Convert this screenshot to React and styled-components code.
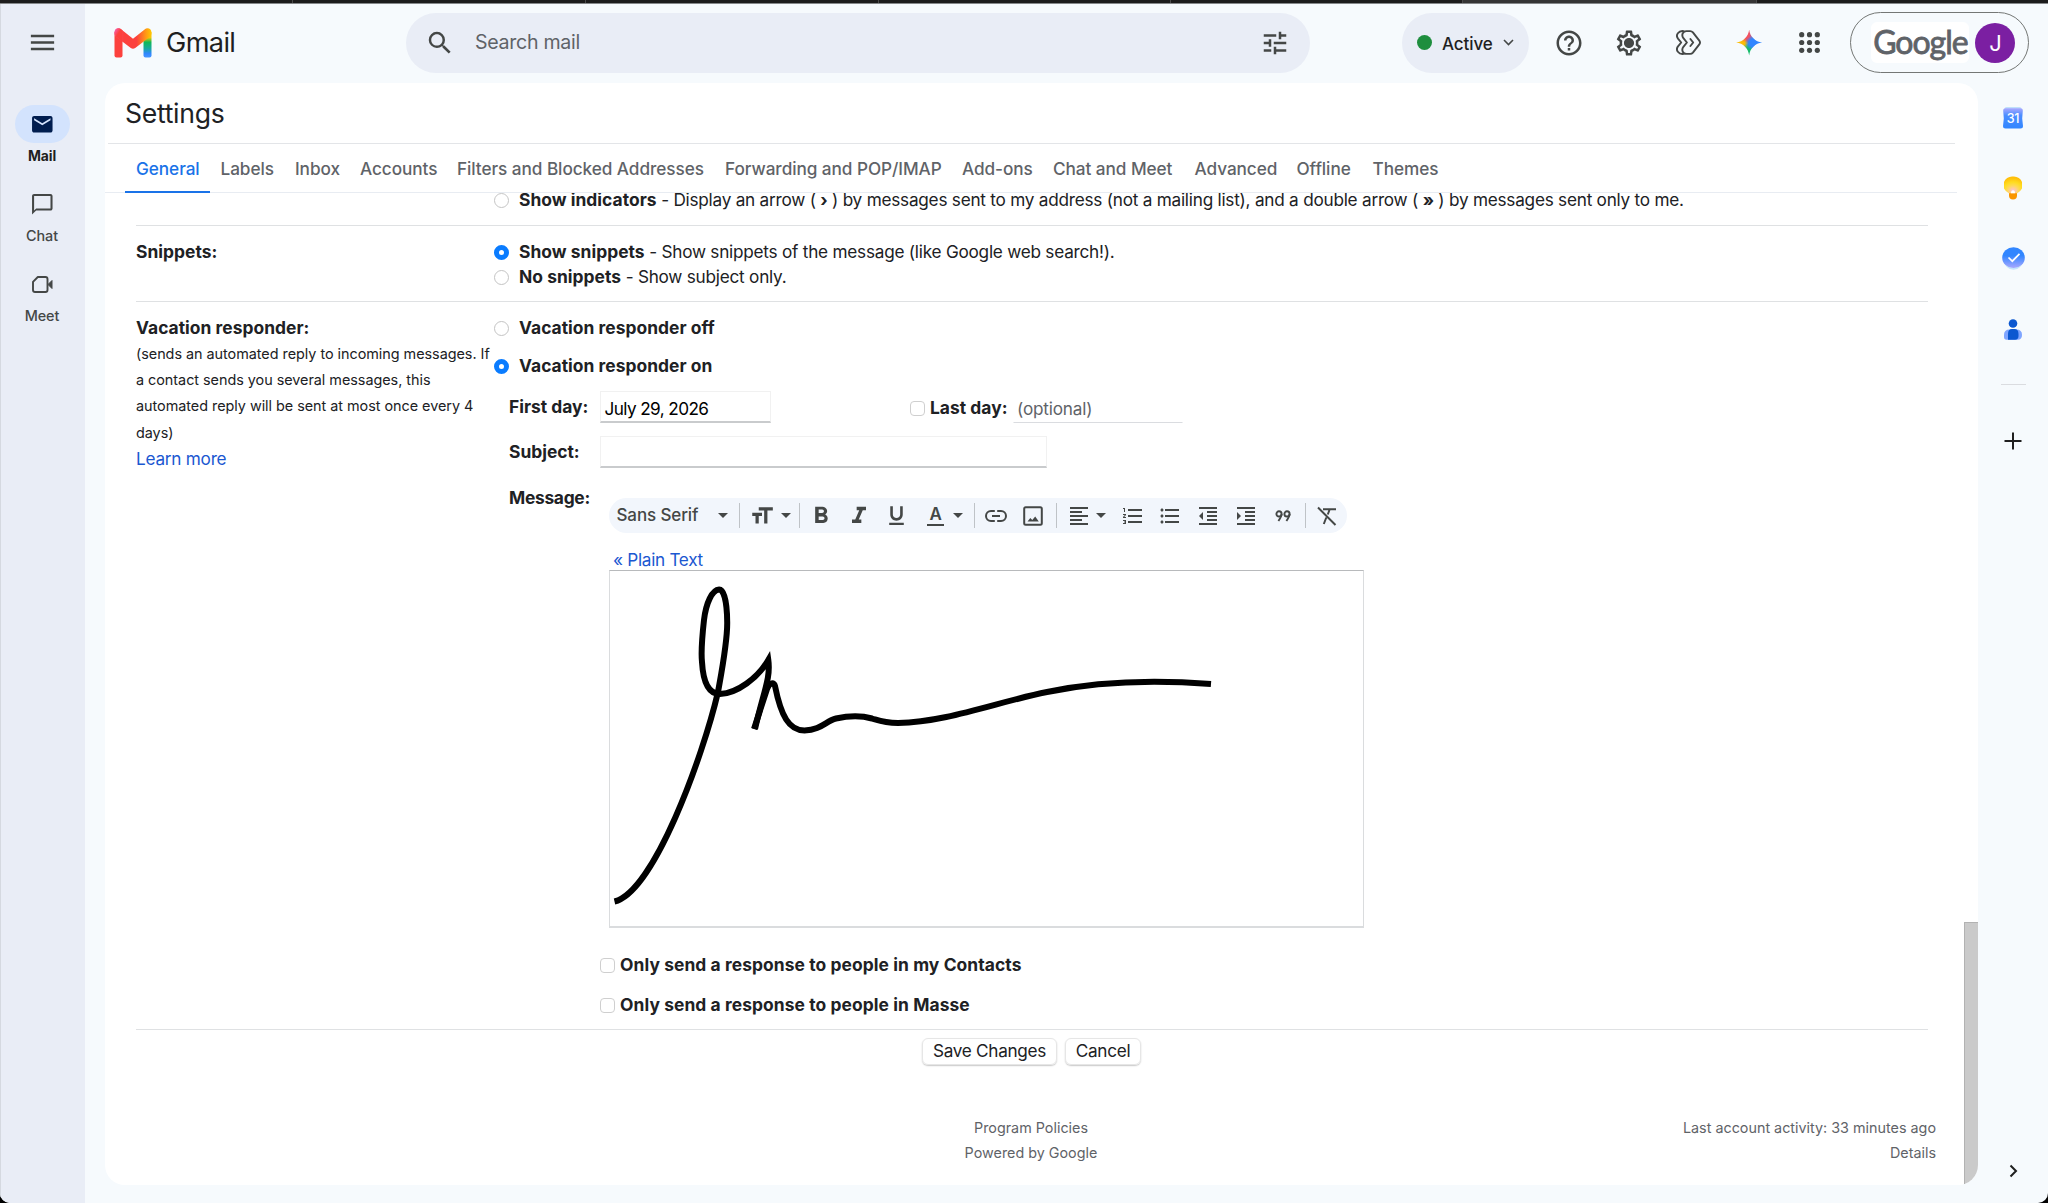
import React, { useState } from "react";
import styled, { createGlobalStyle } from "styled-components";
import {
    MdMenu,
    MdMail,
    MdChatBubbleOutline,
    MdSearch,
    MdTune,
    MdHelpOutline,
    MdOutlineSettings,
    MdFormatSize,
    MdFormatBold,
    MdFormatItalic,
    MdFormatUnderlined,
    MdFormatAlignLeft,
    MdFormatListNumbered,
    MdFormatListBulleted,
    MdFormatIndentDecrease,
    MdFormatIndentIncrease,
} from "react-icons/md";

const GlobalStyle = createGlobalStyle`
    * {
        box-sizing: border-box;
    }
    body {
        margin: 0;
        background: #000;
        color: #202124;
        font-family: Inter, "Liberation Sans", sans-serif;
        font-size: 17.2px;
        letter-spacing: -0.24px;
        overflow: hidden;
    }
    svg {
        display: block;
        flex: none;
    }
`;

const Window = styled.div`
    width: 2048px;
    height: 1203px;
    display: flex;
    flex-direction: column;
    background: #f6fafd;
    border-radius: 0 0 10px 10px;
    overflow: hidden;
`;

const TabStrip = styled.div`
    height: 4px;
    flex: none;
    display: flex;
    background: #1c1c1c;
    border-bottom: 1px solid #85888a;
`;

const BrowserTab = styled.div`
    width: ${p => p.$w || 293}px;
    border-right: 1px solid #4a4a4a;
    background: ${p => (p.$active ? "#353535" : "transparent")};
`;

const Body = styled.div`
    flex: 1;
    display: flex;
    min-height: 0;
`;

/* left rail */
const Rail = styled.nav`
    width: 85px;
    padding-right: 2px;
    background: #e9edf6;
    border-left: 1px solid #d5d9e0;
    display: flex;
    flex-direction: column;
    align-items: center;
    color: #444746;
`;

const MenuButton = styled.div`
    height: 77px;
    margin-bottom: 24px;
    display: flex;
    align-items: center;
`;

const RailItem = styled.div`
    height: 80.3px;
    display: flex;
    flex-direction: column;
    align-items: center;
    font-size: ${p => (p.$active ? 13.9 : 14.4)}px;
    font-weight: ${p => (p.$active ? 700 : 500)};
    letter-spacing: -0.1px;
    line-height: 18px;
    color: ${p => (p.$active ? "#1f1f1f" : "#444746")};
`;

const RailIcon = styled.div`
    width: 55px;
    height: 38px;
    margin-bottom: 3.5px;
    border-radius: 19px;
    display: flex;
    align-items: center;
    justify-content: center;
    background: ${p => (p.$active ? "#d3e3fd" : "transparent")};
    color: ${p => (p.$active ? "#001d4f" : "#444746")};
`;

const Main = styled.div`
    flex: 1;
    display: flex;
    flex-direction: column;
`;

/* header */
const Header = styled.header`
    height: 79px;
    flex: none;
    display: flex;
    align-items: center;
    padding-bottom: 2px;
    color: #444746;
`;

const Brand = styled.div`
    width: 321px;
    padding-left: 29px;
    display: flex;
    align-items: center;
    gap: 14px;
    font-size: 27.2px;
    letter-spacing: -0.65px;
    color: #1f1f1f;
`;

const SearchBar = styled.div`
    width: 904px;
    height: 60px;
    padding: 0 20px 0 19px;
    border-radius: 30px;
    background: #e9edf6;
    display: flex;
    align-items: center;
    justify-content: space-between;
`;

const SearchField = styled.div`
    display: flex;
    align-items: center;
    gap: 20px;
    font-size: 19.6px;
    letter-spacing: -0.3px;
    color: #5f6368;
    svg {
        color: #444746;
    }
`;

const SearchText = styled.span`
    padding-bottom: 2px;
`;

const StatusPill = styled.div`
    width: 127px;
    height: 60px;
    margin-left: 92px;
    padding-left: 15px;
    border-radius: 30px;
    background: #e9edf6;
    display: flex;
    align-items: center;
    font-size: 17px;
    font-weight: 500;
    letter-spacing: -0.1px;
    color: #1f1f1f;
`;

const StatusDot = styled.span`
    width: 15px;
    height: 15px;
    margin-right: 10px;
    border-radius: 50%;
    background: #1e8e3e;
`;

const StatusText = styled.span`
    margin-right: 10px;
    padding-top: 3px;
`;

const HeaderIcons = styled.div`
    display: grid;
    grid-template-columns: repeat(5, 60.2px);
    place-items: center;
    margin-left: 9.5px;
    margin-right: 11px;
`;

const Spark = styled.span`
    width: 26px;
    height: 26px;
    background: radial-gradient(circle at 60% 50%, #3186ff 0 14%, transparent 34%),
        conic-gradient(from 0deg, #f5515f 0deg, #3186ff 45deg 130deg, #14bb69 165deg 195deg, #7cc04b 225deg, #fbbc04 255deg 280deg, #f5515f 325deg 360deg);
    clip-path: path("M13 0C13.7 7 19 12.3 26 13C19 13.7 13.7 19 13 26C12.3 19 7 13.7 0 13C7 12.3 12.3 7 13 0Z");
`;

const Account = styled.div`
    width: 178.5px;
    height: 60.5px;
    border: 1.5px solid #747775;
    border-radius: 31px;
    padding-left: 20px;
    display: flex;
    align-items: center;
    gap: 6px;
`;

const Wordmark = styled.div`
    width: 98px;
    height: 41px;
    border-radius: 6px;
    background: #fff;
    display: flex;
    justify-content: center;
    font-family: Lato, sans-serif;
    font-size: 32px;
    letter-spacing: -1px;
    line-height: 39px;
    color: #5f6368;
    -webkit-text-stroke: 0.8px #5f6368;
`;

const Avatar = styled.div`
    width: 40px;
    height: 40px;
    border-radius: 50%;
    background: #7b1fa2;
    color: #fff;
    font-size: 22px;
    display: flex;
    align-items: center;
    justify-content: center;
`;

/* settings panel */
const Content = styled.div`
    flex: 1;
    display: flex;
    padding: 0 0 18px 20px;
    min-height: 0;
`;

const Panel = styled.main`
    width: 1873px;
    background: #fff;
    border-radius: 20px;
    overflow: hidden;
    display: flex;
    flex-direction: column;
`;

const Title = styled.h1`
    height: 61px;
    flex: none;
    margin: 0 23px 0 3px;
    padding-left: 17px;
    border-bottom: 1px solid #e3e5e8;
    font-size: 26.6px;
    font-weight: 400;
    letter-spacing: -0.3px;
    line-height: 60px;
`;

const Tabs = styled.div`
    height: 49px;
    flex: none;
    margin-right: 21px;
    padding-left: 20px;
    display: flex;
    box-shadow: inset 0 -1px #e8ecf2;
`;

const Tab = styled.div`
    width: ${p => p.$w}px;
    padding-left: 11px;
    line-height: 50px;
    height: 49px;
    font-weight: 500;
    letter-spacing: -0.06px;
    white-space: nowrap;
    color: ${p => (p.$active ? "#1a73e8" : "#5f6368")};
    border-bottom: 2px solid ${p => (p.$active ? "#1a73e8" : "transparent")};
`;

const Scroller = styled.div`
    flex: 1;
    min-height: 0;
    display: flex;
    overflow: hidden;
`;

const ScrollContent = styled.div`
    flex: 1;
    margin-top: -7px;
    padding: 0 36px 0 31px;
`;

const ScrollTrack = styled.div`
    width: 14px;
    padding-top: 729px;
    display: flex;
`;

const ScrollThumb = styled.div`
    flex: 1;
    background: #cacaca;
    border-top: 1px solid #b2b2b2;
    border-left: 1px solid #b2b2b2;
`;

const Section = styled.section`
    height: ${p => p.$h}px;
    padding-top: ${p => p.$pt || 0}px;
    display: grid;
    grid-template-columns: 358px 1fr;
    align-items: start;
    border-bottom: 1px solid #dfe1e3;
    line-height: 27px;
`;

const Strong = styled.b`
    font-size: 17.4px;
    font-weight: 700;
    letter-spacing: 0.04px;
`;

const SectionTitle = styled(Strong)`
    display: block;
    height: 25px;
`;

const Hint = styled.p`
    margin: 2px 0 0;
    width: 360px;
    font-size: 14.4px;
    letter-spacing: -0.03px;
    line-height: 26.2px;
    white-space: pre-line;
`;

const LinkText = styled.a`
    display: block;
    letter-spacing: -0.25px;
    line-height: 25px;
    color: #1b58d1;
`;

const Option = styled.label`
    display: flex;
    height: 25px;
    margin-bottom: ${p => p.$mb || 0}px;
    white-space: pre;
`;

const RadioMark = styled.span`
    width: 15px;
    height: 15px;
    margin: 7px 10px 0 0;
    border-radius: 50%;
    border: ${p => (p.$on ? "5px solid #0a7cff" : "1px solid #c4c4c4")};
    background: #fff;
`;

const CheckMark = styled.span`
    width: 15px;
    height: 15px;
    margin: 6px 5px 0 0;
    border-radius: 4px;
    border: 1px solid #cfcfcf;
    background: #fff;
`;

const CheckText = styled(Strong)`
    letter-spacing: 0.09px;
    line-height: 25px;
`;

const Form = styled.div`
    padding: 3px 0 0 15px;
    line-height: 25px;
`;

const FormRow = styled.div`
    display: flex;
    margin-bottom: ${p => p.$mb || 0}px;
`;

const FieldLabel = styled(Strong)`
    width: 91px;
    padding-top: ${p => p.$pt || 0}px;
    letter-spacing: ${p => p.$ls || 0}px;
`;

const Input = styled.div`
    width: ${p => p.$w}px;
    height: 32px;
    padding: 4px 0 0 ${p => (p.$plain ? 3 : 3.5)}px;
    border: 1px solid ${p => (p.$plain ? "transparent" : "#f1f1f1")};
    border-bottom: ${p => (p.$plain ? "1px solid #dadce0" : "2px solid #c9cbcd")};
    line-height: 25px;
    letter-spacing: ${p => p.$ls || -0.2}px;
    color: ${p => (p.$plain ? "#5f6368" : "#000")};
`;

const LastDay = styled.div`
    margin-left: 139px;
    padding-top: 4px;
    width: 103px;
    display: flex;
`;

/* rich text editor */
const Editor = styled.div`
    padding: 12.5px 0 0 9px;
`;

const Toolbar = styled.div`
    width: 738px;
    height: 35px;
    padding-top: 1px;
    border-radius: 18px;
    background: #f2f6fc;
    display: flex;
    align-items: center;
    color: #444746;
`;

const FontPicker = styled.div`
    width: 129.5px;
    padding: 0 11px 0 7.5px;
    display: flex;
    justify-content: space-between;
    align-items: center;
    font-weight: 500;
    font-size: 17px;
    letter-spacing: -0.12px;
`;

const Caret = styled.span`
    border: 5px solid transparent;
    border-top-color: #444746;
    border-bottom: 0;
    margin: 0 ${p => p.$m || 0}px;
`;

const Divider = styled.span`
    width: 1px;
    height: 25px;
    margin-left: ${p => p.$ml || 0}px;
    background: #bfc3c7;
`;

const Tool = styled.span`
    width: 28px;
    height: 28px;
    margin-left: ${p => p.$ml}px;
    display: flex;
    align-items: center;
    justify-content: center;
`;

const ColorLetter = styled.span`
    width: 17px;
    height: 20px;
    border-bottom: 2px solid #444746;
    text-align: center;
    font-size: 17px;
    font-weight: 600;
    line-height: 16px;
`;

const PlainText = styled(LinkText)`
    height: 22.5px;
    margin: 14.5px 0 0 4px;
    letter-spacing: -0.3px;
`;

const MessageBox = styled.div`
    width: 755px;
    height: 358.5px;
    border: 1px solid #dadcde;
    border-top-color: #b8babc;
    border-bottom-width: 2px;
    margin-bottom: 23.5px;
`;

const Actions = styled.div`
    display: flex;
    justify-content: center;
    gap: 8px;
    padding: 7.5px 1px 0 0;
    height: 84.5px;
`;

const ActionButton = styled.div`
    width: ${p => p.$w}px;
    height: 27px;
    border: 1px solid #e6e6e6;
    border-radius: 6px;
    box-shadow: 0 1px 1.5px rgba(0, 0, 0, 0.22);
    text-align: center;
    line-height: 24px;
    letter-spacing: -0.3px;
`;

const Footer = styled.footer`
    margin: 0 -8px 0 -10px;
    display: grid;
    grid-template-columns: 1fr 1fr 1fr;
    text-align: center;
    font-size: 14.35px;
    letter-spacing: 0;
    line-height: 25.4px;
    color: #5f6368;
`;

const FooterRight = styled.div`
    text-align: right;
`;

/* add-on bar on the right */
const AddOns = styled.aside`
    width: 70px;
    display: flex;
    flex-direction: column;
    align-items: center;
`;

const AddOn = styled.div`
    height: 70.3px;
    display: flex;
    align-items: center;
`;

const AddOnLine = styled.div`
    width: 25px;
    height: 1px;
    margin: 20px 0 47px;
    background: #dadce0;
`;

const AddOnToggle = styled.div`
    margin-top: auto;
    margin-bottom: 7px;
`;

const CalendarText = styled.text`
    font-size: 12.5px;
    font-weight: 500;
    letter-spacing: -0.3px;
`;

const GmailLogo = () => (
    <svg width="38" height="30" viewBox="0 0 38 30">
        <defs>
            <linearGradient id="gl" x1="0" y1="0" x2="0.9" y2="1">
                <stop offset="0" stopColor="#f966c3" />
                <stop offset="0.45" stopColor="#fc413d" />
                <stop offset="1" stopColor="#fc413d" />
            </linearGradient>
            <linearGradient id="gr" x1="0" y1="0" x2="0" y2="1">
                <stop offset="0" stopColor="#ffc800" />
                <stop offset="0.22" stopColor="#f2c60c" />
                <stop offset="0.4" stopColor="#10b956" />
                <stop offset="0.65" stopColor="#18a9a0" />
                <stop offset="0.85" stopColor="#3186ff" />
                <stop offset="1" stopColor="#4796ff" />
            </linearGradient>
            <linearGradient id="gm" x1="0" y1="0" x2="1" y2="0">
                <stop offset="0" stopColor="#f966a8" />
                <stop offset="0.25" stopColor="#fc413d" />
                <stop offset="0.6" stopColor="#fc413d" />
                <stop offset="0.85" stopColor="#ff9a14" />
                <stop offset="1" stopColor="#ffc800" />
            </linearGradient>
        </defs>
        <path d="M0.5 4V27.5Q0.5 29.5 2.5 29.5H6.5Q8.5 29.5 8.5 27.5V8Z" fill="#fc413d" />
        <path d="M29.5 8V27.5Q29.5 29.5 31.5 29.5H35.5Q37.5 29.5 37.5 27.5V4Z" fill="url(#gr)" />
        <path d="M0.5 4.5C0.5 0.4 4.8-0.8 7.4 1.4L19 10.8L30.6 1.4C33.2-0.8 37.5 0.4 37.5 4.5C37.5 6.8 36.8 8 35.3 9.2L21.2 20.1Q19 21.6 16.8 20.1L2.7 9.2C1.2 8 0.5 6.8 0.5 4.5Z" fill="url(#gm)" />
        <path d="M0.5 4.5C0.5 0.4 4.8-0.8 7.4 1.4L8.5 2.3V13.7L2.7 9.2C1.2 8 0.5 6.8 0.5 4.5Z" fill="url(#gl)" />
    </svg>
);

const MeetIcon = () => (
    <svg width="21" height="17" viewBox="0 0 21 17" fill="none" stroke="#444746" strokeWidth="1.9">
        <path d="M5.8 1H13.5Q15.5 1 15.5 3V14Q15.5 16 13.5 16H3Q1 16 1 14V5.8Z" strokeLinejoin="round" />
        <path d="M16 8.5L20 4.5V12.5Z" fill="#444746" strokeWidth="1" />
    </svg>
);

const GearIcon = () => (
    <svg width="30" height="30" viewBox="0 0 30 30">
        <MdOutlineSettings size={30} />
        <circle cx="15" cy="15" r="4.6" fill="#444746" />
    </svg>
);

const LabsIcon = () => (
    <svg width="25" height="25" viewBox="0 0 25 25" fill="none" stroke="#444746" strokeWidth="1.9" strokeLinejoin="round" strokeLinecap="round">
        <path d="M7.6 1.1C2.6 0.4-0.8 5 2 8.6L5.2 12.5L2 16.4C-0.8 20 2.6 24.6 7.6 23.9" />
        <path d="M7.4 8.2C5 5 7 1.1 10.4 1.1H14.2C15.3 1.1 16.2 1.6 16.9 2.4L23.3 10.6C24.2 11.8 24.2 13.2 23.3 14.4L16.9 22.6C16.2 23.4 15.3 23.9 14.2 23.9H10.4C7 23.9 5 20 7.4 16.8L10.9 12.5Z" />
        <path d="M14.4 9L17.2 12.5L14.4 16" />
    </svg>
);

const AppsIcon = () => (
    <svg width="21" height="21" viewBox="0 0 21 21" fill="#444746">
        {[2.7, 10.5, 18.3].map(y => [2.7, 10.5, 18.3].map(x => <circle key={`${x}-${y}`} cx={x} cy={y} r="2.6" />))}
    </svg>
);

const LinkIcon = () => (
    <svg width="22" height="12" viewBox="0 0 22 12" fill="none" stroke="#444746" strokeWidth="2">
        <path d="M9.8 1H6a5 5 0 0 0 0 10H9.8M12.2 1H16a5 5 0 0 1 0 10H12.2M7 6H15" />
    </svg>
);

const ImageIcon = () => (
    <svg width="20" height="20" viewBox="0 0 20 20">
        <rect x="1.2" y="1.2" width="17.6" height="17.6" rx="1.5" fill="none" stroke="#444746" strokeWidth="2" />
        <path d="M4.500 15.500L7.300 12L9.300 14L12.200 10.500L15.800 15.500Z" fill="#444746" />
    </svg>
);

const QuoteIcon = () => (
    <svg width="16" height="12" viewBox="0 0 16 12" fill="none" stroke="#444746" strokeWidth="1.9">
        <circle cx="4" cy="3.9" r="2.6" />
        <circle cx="12" cy="3.9" r="2.6" />
        <path d="M6.6 4Q6.5 6.5 3.4 11M14.6 4Q14.5 6.5 11.4 11" />
    </svg>
);

const ClearIcon = () => (
    <svg width="20" height="20" viewBox="0 0 20 20" fill="none" stroke="#444746" strokeWidth="2">
        <path d="M1 1.5L18.5 19M6 3.2H19M12.6 3.5L10.8 8.5M9.3 11.5L6.8 18" />
    </svg>
);

const CalendarIcon = () => (
    <svg width="20" height="22" viewBox="0 0 20 22">
        <defs>
            <linearGradient id="cal" x1="0" y1="0" x2="0" y2="1">
                <stop offset="0" stopColor="#a9a8ff" />
                <stop offset="0.35" stopColor="#4b8dff" />
                <stop offset="1" stopColor="#3186ff" />
            </linearGradient>
        </defs>
        <rect x="1.5" y="0" width="17" height="6" rx="2" fill="#bfe0fb" />
        <path d="M2.5 1.3H17.5Q20 1.3 19.8 4L19.2 11.5L20 19Q20 21.5 17.5 21.5H2.5Q0 21.5 0 19L0.8 11.5L0.2 4Q0 1.3 2.5 1.3Z" fill="url(#cal)" />
        <CalendarText x="10" y="16" fill="#fff" textAnchor="middle">31</CalendarText>
    </svg>
);

const KeepIcon = () => (
    <svg width="18" height="24" viewBox="0 0 18 24">
        <defs>
            <radialGradient id="keep" cx="0.5" cy="0.85" r="0.85">
                <stop offset="0" stopColor="#ffc0dc" />
                <stop offset="0.35" stopColor="#ffd95a" />
                <stop offset="0.6" stopColor="#ffdc1f" />
                <stop offset="0.9" stopColor="#ffbf0a" />
            </radialGradient>
        </defs>
        <path d="M5 15H13V19.5A4 4 0 0 1 5 19.5Z" fill="#fa9600" />
        <path d="M9 0.5A8.7 8.7 0 0 0 4.8 17.2H13.2A8.7 8.7 0 0 0 9 0.5Z" fill="url(#keep)" />
        <path d="M7 17.2Q7 14.2 9 14.2T11 17.2Z" fill="#fff" />
    </svg>
);

const TasksIcon = () => (
    <svg width="23" height="23" viewBox="0 0 23 23">
        <defs>
            <linearGradient id="task" x1="0" y1="0" x2="0" y2="1">
                <stop offset="0.4" stopColor="#3186ff" />
                <stop offset="1" stopColor="#a9a8ff" />
            </linearGradient>
        </defs>
        <ellipse cx="11.5" cy="13.5" rx="9.5" ry="9.2" fill="#c4e4fb" />
        <ellipse cx="11.5" cy="10.7" rx="11.3" ry="10.4" fill="url(#task)" />
        <path d="M6.5 10.5L10.3 14.2L17.5 6.8" fill="none" stroke="#fff" strokeWidth="1.7" />
    </svg>
);

const ContactsIcon = () => (
    <svg width="18" height="21" viewBox="0 0 18 21">
        <circle cx="9" cy="4.5" r="4.3" fill="#0b57d0" />
        <path d="M0 16Q0 10.5 5.5 10.5H12.5Q18 10.5 18 16Q18 20.7 13.5 20.7H2.5Q0 20.7 0 18Z" fill="#7fa5ff" />
        <path d="M4 15Q4 10 8 10H10.5Q14.5 10 14.5 15V17Q14.5 20.7 11 20.7H4Z" fill="#0b57d0" />
    </svg>
);

const Signature = () => (
    <svg width="620" height="345" viewBox="1 1 620 345" fill="none" stroke="#000" strokeWidth="6">
        <path
            strokeMiterlimit="8"
            d="M5.5 331.5C45 322 94 186 109 122C114 94 118.500 71 118.200 52C118 30 114.500 19.500 110.200 19.500C103 20 97 33 95 50C93 68 92 83 93 92C94 110 99 124 111 124C128 123.500 149 108 159.300 90C161.800 108 155 120 146 159"
        />
        <path
            strokeLinejoin="round"
            d="M145 159L158 119C161 112 165 112 166 116C172 146 180 160.500 195.500 160.500C212 160 217 151 227 148.500C241 145.500 254 146 263 148.500C271 151 275 153 289 153C338 152 388 132 438 122C488 111.500 543 109.500 602 114"
        />
    </svg>
);

const tabs = [
    { name: "General", w: 84.5 },
    { name: "Labels", w: 74.5 },
    { name: "Inbox", w: 65 },
    { name: "Accounts", w: 97 },
    { name: "Filters and Blocked Addresses", w: 268 },
    { name: "Forwarding and POP/IMAP", w: 237 },
    { name: "Add-ons", w: 91 },
    { name: "Chat and Meet", w: 141.5 },
    { name: "Advanced", w: 102 },
    { name: "Offline", w: 76 },
    { name: "Themes", w: 80 },
];

const Radio = ({ on, title, text, mb, onClick }) => (
    <Option $mb={mb} onClick={onClick}>
        <RadioMark $on={on} />
        <Strong>{title}</Strong>
        {text && <span> - {text}</span>}
    </Option>
);

const Check = ({ children, mb }) => (
    <Option $mb={mb}>
        <CheckMark />
        <CheckText>{children}</CheckText>
    </Option>
);

const EditorToolbar = () => (
    <Toolbar>
        <FontPicker>
            Sans Serif
            <Caret />
        </FontPicker>
        <Divider />
        <Tool $ml={8}><MdFormatSize size={26} /></Tool>
        <Caret $m={5} />
        <Divider $ml={3.5} />
        <Tool $ml={7}><MdFormatBold size={28} /></Tool>
        <Tool $ml={10}><MdFormatItalic size={28} /></Tool>
        <Tool $ml={9.5}><MdFormatUnderlined size={25} /></Tool>
        <Tool $ml={11}><ColorLetter>A</ColorLetter></Tool>
        <Caret $m={3} />
        <Divider $ml={8} />
        <Tool $ml={7}><LinkIcon /></Tool>
        <Tool $ml={9.5}><ImageIcon /></Tool>
        <Divider $ml={8.5} />
        <Tool $ml={8}><MdFormatAlignLeft size={24} /></Tool>
        <Caret $m={3} />
        <Tool $ml={10}><MdFormatListNumbered size={24} /></Tool>
        <Tool $ml={9.5}><MdFormatListBulleted size={24} /></Tool>
        <Tool $ml={9.5}><MdFormatIndentDecrease size={24} /></Tool>
        <Tool $ml={10}><MdFormatIndentIncrease size={24} /></Tool>
        <Tool $ml={9}><QuoteIcon /></Tool>
        <Divider $ml={8} />
        <Tool $ml={7}><ClearIcon /></Tool>
    </Toolbar>
);

const App = () => {
    const [activeTab, setActiveTab] = useState("General");
    const [snippets, setSnippets] = useState(true);
    const [vacation, setVacation] = useState(true);

    return (
        <Window>
            <GlobalStyle />
            <TabStrip>
                <BrowserTab />
                <BrowserTab />
                <BrowserTab />
                <BrowserTab $w={292} />
                <BrowserTab $w={292} />
                <BrowserTab $active $w={294} />
            </TabStrip>
            <Body>
                <Rail>
                    <MenuButton><MdMenu size={31} /></MenuButton>
                    <RailItem $active>
                        <RailIcon $active><MdMail size={24.6} /></RailIcon>
                        Mail
                    </RailItem>
                    <RailItem>
                        <RailIcon><MdChatBubbleOutline size={24.6} /></RailIcon>
                        Chat
                    </RailItem>
                    <RailItem>
                        <RailIcon><MeetIcon /></RailIcon>
                        Meet
                    </RailItem>
                </Rail>
                <Main>
                    <Header>
                        <Brand>
                            <GmailLogo />
                            Gmail
                        </Brand>
                        <SearchBar>
                            <SearchField>
                                <MdSearch size={30} />
                                <SearchText>Search mail</SearchText>
                            </SearchField>
                            <MdTune size={30} />
                        </SearchBar>
                        <StatusPill>
                            <StatusDot />
                            <StatusText>Active</StatusText>
                            <svg width="11" height="7" viewBox="0 0 11 7" fill="none" stroke="#444746" strokeWidth="1.6">
                                <path d="M1 1L5.500 5.500L10 1" />
                            </svg>
                        </StatusPill>
                        <HeaderIcons>
                            <MdHelpOutline size={30} />
                            <GearIcon />
                            <LabsIcon />
                            <Spark />
                            <AppsIcon />
                        </HeaderIcons>
                        <Account>
                            <Wordmark>Google</Wordmark>
                            <Avatar>J</Avatar>
                        </Account>
                    </Header>
                    <Content>
                        <Panel>
                            <Title>Settings</Title>
                            <Tabs>
                                {tabs.map(tab => (
                                    <Tab
                                        key={tab.name}
                                        $w={tab.w}
                                        $active={tab.name === activeTab}
                                        onClick={() => setActiveTab(tab.name)}
                                    >
                                        {tab.name}
                                    </Tab>
                                ))}
                            </Tabs>
                            <Scroller>
                                <ScrollContent>
                                    <Section $h={40}>
                                        <div />
                                        <Radio
                                            title="Show indicators"
                                            text={
                                                <>
                                                    Display an arrow ( <b>›</b> ) by messages sent to my address (not a mailing list), and a double
                                                    arrow ( <b>»</b> ) by messages sent only to me.
                                                </>
                                            }
                                        />
                                    </Section>
                                    <Section $h={76} $pt={11.5}>
                                        <SectionTitle>Snippets:</SectionTitle>
                                        <div>
                                            <Radio
                                                on={snippets}
                                                onClick={() => setSnippets(true)}
                                                title="Show snippets"
                                                text="Show snippets of the message (like Google web search!)."
                                            />
                                            <Radio
                                                on={!snippets}
                                                onClick={() => setSnippets(false)}
                                                title="No snippets"
                                                text="Show subject only."
                                            />
                                        </div>
                                    </Section>
                                    <Section $h={728} $pt={12}>
                                        <div>
                                            <SectionTitle>Vacation responder:</SectionTitle>
                                            <Hint>
                                                {"(sends an automated reply to incoming messages. If\na contact sends you several messages, this\nautomated reply will be sent at most once every 4\ndays)"}
                                            </Hint>
                                            <LinkText>Learn more</LinkText>
                                        </div>
                                        <div>
                                            <Radio on={!vacation} onClick={() => setVacation(false)} title="Vacation responder off" mb={12.5} />
                                            <Radio on={vacation} onClick={() => setVacation(true)} title="Vacation responder on" mb={11.5} />
                                            <Form>
                                                <FormRow $mb={13}>
                                                    <FieldLabel $pt={3}>First day:</FieldLabel>
                                                    <Input $w={171} $ls={-0.6}>July 29, 2026</Input>
                                                    <LastDay>
                                                        <CheckMark />
                                                        <Strong>Last day:</Strong>
                                                    </LastDay>
                                                    <Input $w={170} $plain>(optional)</Input>
                                                </FormRow>
                                                <FormRow $mb={17}>
                                                    <FieldLabel $pt={3}>Subject:</FieldLabel>
                                                    <Input $w={447} />
                                                </FormRow>
                                                <FormRow>
                                                    <FieldLabel $ls={-0.3}>Message:</FieldLabel>
                                                    <div>
                                                        <Editor>
                                                            <EditorToolbar />
                                                            <PlainText>« Plain Text</PlainText>
                                                            <MessageBox>
                                                                <Signature />
                                                            </MessageBox>
                                                        </Editor>
                                                        <Check mb={15}>Only send a response to people in my Contacts</Check>
                                                        <Check>Only send a response to people in Masse</Check>
                                                    </div>
                                                </FormRow>
                                            </Form>
                                        </div>
                                    </Section>
                                    <Actions>
                                        <ActionButton $w={135}>Save Changes</ActionButton>
                                        <ActionButton $w={76}>Cancel</ActionButton>
                                    </Actions>
                                    <Footer>
                                        <div />
                                        <div>
                                            Program Policies
                                            <br />
                                            Powered by Google
                                        </div>
                                        <FooterRight>
                                            Last account activity: 33 minutes ago
                                            <br />
                                            Details
                                        </FooterRight>
                                    </Footer>
                                </ScrollContent>
                                <ScrollTrack>
                                    <ScrollThumb />
                                </ScrollTrack>
                            </Scroller>
                        </Panel>
                        <AddOns>
                            <AddOn><CalendarIcon /></AddOn>
                            <AddOn><KeepIcon /></AddOn>
                            <AddOn><TasksIcon /></AddOn>
                            <AddOn><ContactsIcon /></AddOn>
                            <AddOnLine />
                            <svg width="18" height="18" viewBox="0 0 18 18" stroke="#1f1f1f" strokeWidth="2">
                                <path d="M9 0.500V17.500M0.500 9H17.500" />
                            </svg>
                            <AddOnToggle>
                                <svg width="9" height="14" viewBox="0 0 9 14" fill="none" stroke="#1f1f1f" strokeWidth="2">
                                    <path d="M1.500 1.500L7 7L1.500 12.500" />
                                </svg>
                            </AddOnToggle>
                        </AddOns>
                    </Content>
                </Main>
            </Body>
        </Window>
    );
};

export default App;
